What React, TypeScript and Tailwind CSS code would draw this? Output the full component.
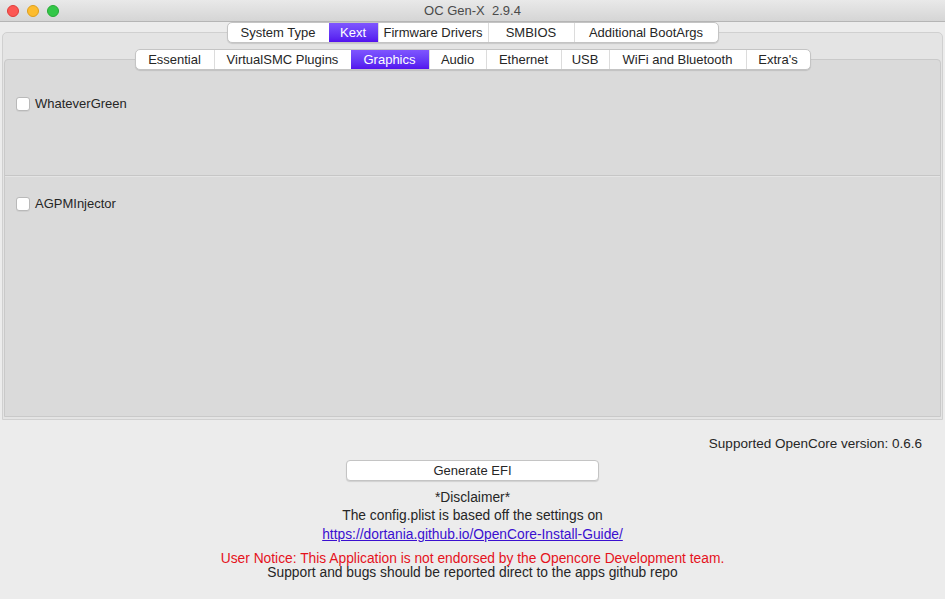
import { useState } from 'react';

const outerTabs = [
  { label: 'System Type', w: 'w-[101px]' },
  { label: 'Kext', w: 'w-[49px]' },
  { label: 'Firmware Drivers', w: 'w-[110px]' },
  { label: 'SMBIOS', w: 'w-[86px]' },
  { label: 'Additional BootArgs', w: 'w-[144px]' },
];

const innerTabs = [
  { label: 'Essential', w: 'w-[78px]' },
  { label: 'VirtualSMC Plugins', w: 'w-[137px]' },
  { label: 'Graphics', w: 'w-[78px]' },
  { label: 'Audio', w: 'w-[57px]' },
  { label: 'Ethernet', w: 'w-[75px]' },
  { label: 'USB', w: 'w-[48px]' },
  { label: 'WiFi and Bluetooth', w: 'w-[137px]' },
  { label: "Extra's", w: 'w-[64px]' },
];

interface SegmentedProps {
  tabs: { label: string; w: string }[];
  active: string;
  onSelect: (label: string) => void;
}

function Segmented({ tabs, active, onSelect }: SegmentedProps) {
  return (
    <div className="flex h-[21px] rounded-[5px] bg-white border border-[#c4c4c4] shadow-[0_1px_1px_rgba(0,0,0,0.12)] overflow-hidden">
      {tabs.map((t, i) => {
        const on = t.label === active;
        return (
          <button
            key={t.label}
            onClick={() => onSelect(t.label)}
            className={`${t.w} h-full flex items-center justify-center text-[13px] leading-none ${
              i > 0 && !on ? 'border-l border-[#dcdcdc]' : ''
            } ${on ? 'bg-gradient-to-b from-[#7f55ff] to-[#5410ee] text-white' : 'text-[#262626]'}`}
          >
            {t.label}
          </button>
        );
      })}
    </div>
  );
}

function Check({ label }: { label: string }) {
  const [checked, setChecked] = useState(false);
  return (
    <label className="flex items-center gap-[5px] text-[13px] text-[#262626] cursor-default">
      <span
        onClick={() => setChecked(!checked)}
        className="w-[14px] h-[14px] rounded-[3px] bg-white border border-[#b9b9b9] shadow-[0_1px_0_rgba(0,0,0,0.05)] flex items-center justify-center text-[10px] leading-none"
      >
        {checked ? '✓' : ''}
      </span>
      {label}
    </label>
  );
}

export default function App() {
  const [outer, setOuter] = useState('Kext');
  const [inner, setInner] = useState('Graphics');

  return (
    <div className="w-[945px] h-[599px] bg-[#ececec] flex flex-col overflow-hidden font-['Liberation_Sans',Arial,sans-serif]">
      {/* Title bar */}
      <div className="relative h-[22px] shrink-0 bg-gradient-to-b from-[#e9e9e9] to-[#d5d5d5] border-b border-[#b5b5b5] flex items-center justify-center">
        <div className="absolute left-[7px] top-[5px] flex gap-[8px]">
          <span className="w-[12px] h-[12px] rounded-full bg-[#fc5753] border border-[#df3d39]" />
          <span className="w-[12px] h-[12px] rounded-full bg-[#fdbc2e] border border-[#de9f1b]" />
          <span className="w-[12px] h-[12px] rounded-full bg-[#33c748] border border-[#27aa35]" />
        </div>
        <span className="text-[13px] text-[#4a4a4a] whitespace-pre">OC Gen-X  2.9.4</span>
      </div>

      {/* Outer tab view */}
      <div className="px-[2px]">
        <div className="relative z-10 flex justify-center -mb-[11px]">
          <Segmented tabs={outerTabs} active={outer} onSelect={setOuter} />
        </div>
        <div className="h-[388px] rounded-t-[5px] border border-[#d0d0d0] bg-[#e4e4e4] px-px pt-[16px] flex flex-col">
          <div className="relative z-10 flex justify-center -mb-[11px]">
            <Segmented tabs={innerTabs} active={inner} onSelect={setInner} />
          </div>
          <div className="h-[358px] rounded-t-[4px] border border-[#c9c9c9] bg-[#dadada] flex flex-col">
            <div className="h-[116px] border-b border-[#c6c6c6] pl-[11px] pt-[34px]">
              <Check label="WhateverGreen" />
            </div>
            <div className="flex-1 border-t border-[#e4e4e4] pl-[11px] pt-[17px]">
              <Check label="AGPMInjector" />
            </div>
          </div>
        </div>
      </div>

      {/* Bottom area */}
      <div className="flex flex-col items-center text-[13.8px] text-[#262626]">
        <div className="self-end pr-[23px] pt-[16px] leading-[16px] text-[13.5px]">Supported OpenCore version: 0.6.6</div>
        <button className="mt-[8px] w-[253px] h-[21px] rounded-[4px] bg-white border border-[#c4c4c4] shadow-[0_1px_1px_rgba(0,0,0,0.12)] text-[13px] leading-none text-[#262626]">
          Generate EFI
        </button>
        <div className="mt-[8px] leading-[18px]">*Disclaimer*</div>
        <div className="leading-[18px]">The config.plist is based off the settings on</div>
        <a href="#" className="leading-[20px] text-[#3a0fd0] underline">
          https://dortania.github.io/OpenCore-Install-Guide/
        </a>
        <div className="mt-[7px] leading-[14px] text-[#e5121c]">
          User Notice: This Application is not endorsed by the Opencore Development team.
        </div>
        <div className="leading-[14px]">Support and bugs should be reported direct to the apps github repo</div>
      </div>
    </div>
  );
}
